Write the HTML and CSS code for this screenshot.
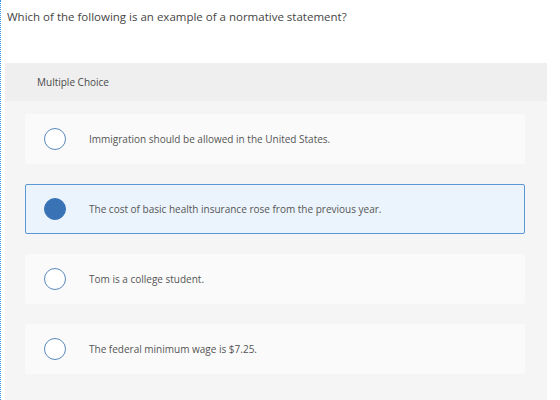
FILE: index.html
```html
<!DOCTYPE html>
<html lang="en">
<head>
  <meta charset="UTF-8">
  <title>Question</title>
  <link rel="stylesheet" href="styles.css">
</head>
<body>

<div class="question">
  <p class="prompt">Which of the following is an example of a normative statement?</p>

  <div class="choices">
    <div class="choices-header">Multiple Choice</div>
    <div class="choices-body">
      <label class="choice">
        <span class="radio"></span>
        <span class="choice-text">Immigration should be allowed in the United States.</span>
      </label>
      <label class="choice selected">
        <span class="radio"></span>
        <span class="choice-text">The cost of basic health insurance rose from the previous year.</span>
      </label>
      <label class="choice">
        <span class="radio"></span>
        <span class="choice-text">Tom is a college student.</span>
      </label>
      <label class="choice">
        <span class="radio"></span>
        <span class="choice-text">The federal minimum wage is $7.25.</span>
      </label>
    </div>
  </div>
</div>

</body>
</html>
```

FILE: styles.css
```css
/* Page */
body {
  margin: 0;
  background-color: #ffffff;
  font-family: "Open Sans", "Liberation Sans", sans-serif;
  color: #444444;
}

.question {
  border-left: 1px dotted #3b8de0;
  padding-left: 4px;
  width: 542px;
  height: 400px;
  box-sizing: content-box;
}

.prompt {
  margin: 0;
  padding: 10px 0 0 2px;
  height: 53px;
  font-size: 11.5px;
  line-height: 14px;
  color: #454545;
}

/* Choice panel */
.choices {
  background-color: #f5f5f5;
  height: 337px;
}

.choices-header {
  background-color: #efefef;
  height: 38px;
  line-height: 38px;
  padding-left: 32px;
  font-size: 10px;
  color: #4a4a4a;
}

.choices-body {
  display: flex;
  flex-direction: column;
  gap: 20px;
  padding: 13px 22px 0 20px;
}

.choice {
  display: flex;
  align-items: center;
  height: 50px;
  box-sizing: border-box;
  background-color: #fafafa;
  border-radius: 2px;
  padding-left: 19px;
}

.choice.selected {
  background-color: #ebf3fc;
  border: 1px solid #5b96d6;
  padding-left: 18px;
}

.radio {
  width: 22px;
  height: 22px;
  box-sizing: border-box;
  border: 1.5px solid #5a89bd;
  border-radius: 50%;
  background-color: #ffffff;
  flex-shrink: 0;
}

.selected .radio {
  background-color: #3a73b5;
  border-color: #3a73b5;
}

.choice-text {
  margin-left: 23px;
  font-size: 10px;
  color: #555555;
}
```
